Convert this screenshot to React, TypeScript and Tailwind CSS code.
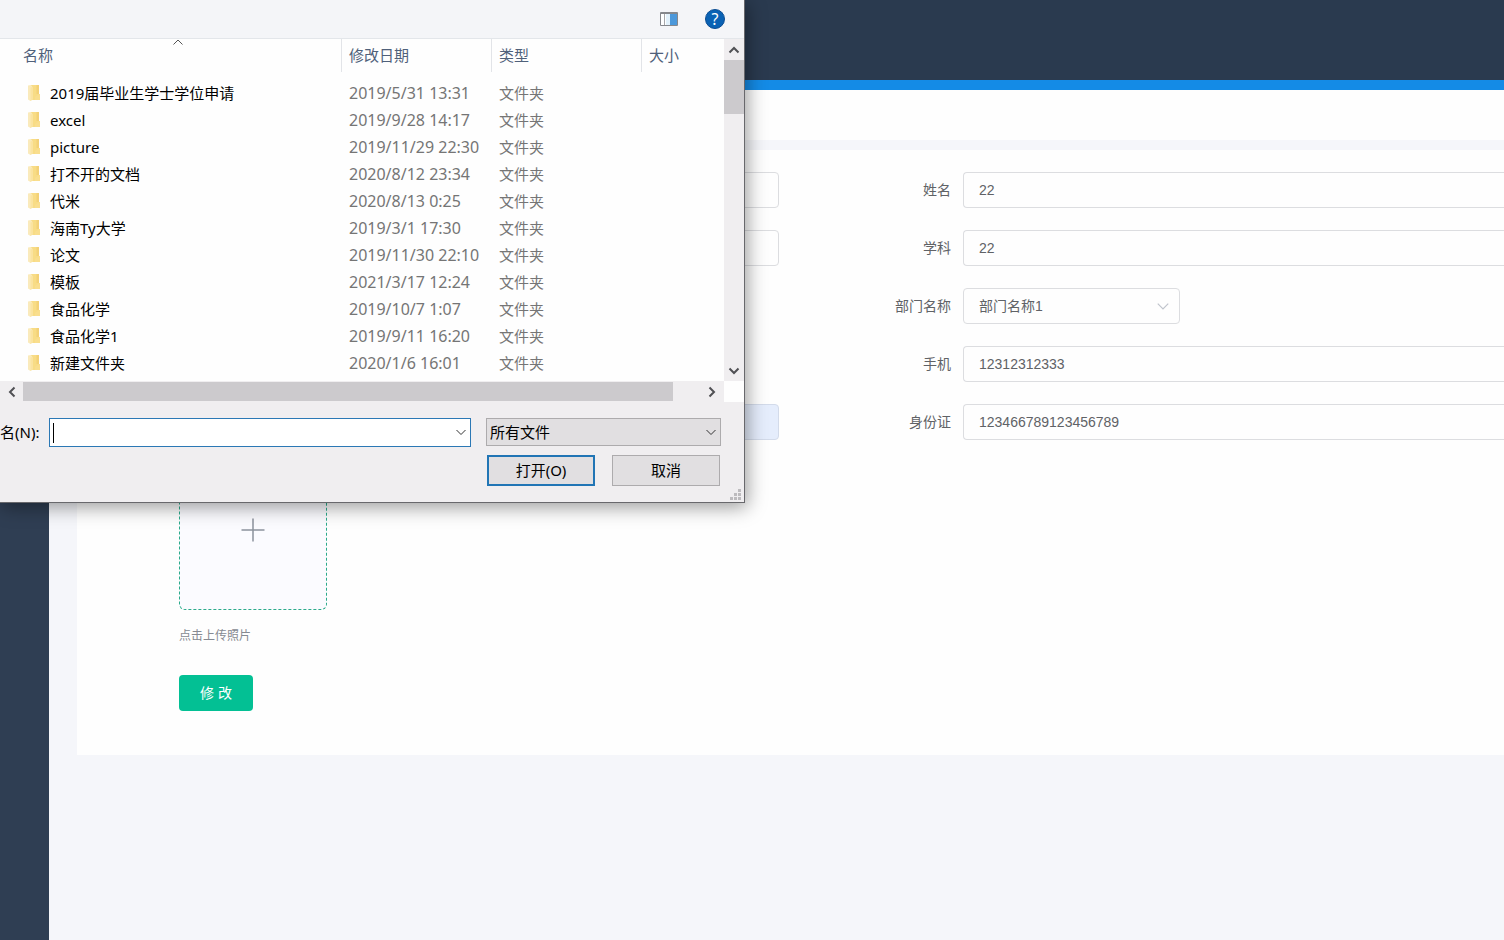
import React, { useState } from "react";
import clsx from "clsx";

interface FileEntry {
  name: string;
  date: string;
}

interface Field {
  id: string;
  label: string;
  value: string;
}

const files: FileEntry[] = [
  { name: "2019届毕业生学士学位申请", date: "2019/5/31 13:31" },
  { name: "excel", date: "2019/9/28 14:17" },
  { name: "picture", date: "2019/11/29 22:30" },
  { name: "打不开的文档", date: "2020/8/12 23:34" },
  { name: "代米", date: "2020/8/13 0:25" },
  { name: "海南Ty大学", date: "2019/3/1 17:30" },
  { name: "论文", date: "2019/11/30 22:10" },
  { name: "模板", date: "2021/3/17 12:24" },
  { name: "食品化学", date: "2019/10/7 1:07" },
  { name: "食品化学1", date: "2019/9/11 16:20" },
  { name: "新建文件夹", date: "2020/1/6 16:01" },
];

const initialFields: Field[] = [
  { id: "name", label: "姓名", value: "22" },
  { id: "subject", label: "学科", value: "22" },
  { id: "department", label: "部门名称", value: "部门名称1" },
  { id: "phone", label: "手机", value: "12312312333" },
  { id: "idcard", label: "身份证", value: "123466789123456789" },
];

const inputClass =
  "h-9 w-full min-w-0 rounded border border-[#dcdde0] bg-[#fefefe] px-[15px] text-sm text-[#606266] outline-none";

function Chevron({ className, path, size = 12 }: { className?: string; path: string; size?: number }) {
  return (
    <svg
      width={size}
      height={size}
      viewBox="0 0 12 12"
      fill="none"
      stroke="currentColor"
      className={clsx("pointer-events-none", className)}
    >
      <path d={path} />
    </svg>
  );
}

function FolderIcon() {
  return (
    <svg width="14" height="18" viewBox="0 0 14 18" className="shrink-0">
      <path d="M3 1h8v9h1v6H3z" fill="#f8dc85" />
      <path d="M8.500 1H11v9H8.500z" fill="#f3d177" />
      <path d="M11 10h1v6H7v-3z" fill="#f9de8e" />
      <path d="M0 1.500 3 1l1.500 2v12.500L2.500 17 0 15.500z" fill="#faeabb" />
      <path d="M2.500 3.500 4.500 3v12.500L2.500 17z" fill="#fbe4a0" />
    </svg>
  );
}

function FileTable() {
  return (
    <table className="w-full table-fixed border-collapse text-left">
      <colgroup>
        <col className="w-[341px]" />
        <col className="w-[150px]" />
        <col className="w-[150px]" />
        <col />
      </colgroup>
      <thead>
        <tr className="text-[#4f607a]">
          <th className="relative h-10 p-0 align-top font-normal">
            <Chevron
              className="absolute top-[-2px] left-[172px] text-[#555]"
              path="M1.500 7.500 6 3l4.500 4.500"
            />
            <div className="flex h-[33px] items-center pb-0.5 pl-[23px]">名称</div>
          </th>
          {["修改日期", "类型", "大小"].map((title) => (
            <th key={title} className="h-10 p-0 align-top font-normal">
              <div className="flex h-[33px] items-center border-l border-[#e2e4e8] pb-0.5 pl-[7px]">
                {title}
              </div>
            </th>
          ))}
        </tr>
      </thead>
      <tbody>
        {files.map((file) => (
          <tr key={file.name} className="h-[27px] text-[#757575]">
            <td className="p-0">
              <div className="flex items-center gap-2 pl-7 text-black">
                <FolderIcon />
                {file.name}
              </div>
            </td>
            <td className="p-0 pl-2 text-base leading-5 whitespace-nowrap">{file.date}</td>
            <td className="p-0 pl-2">文件夹</td>
            <td className="p-0" />
          </tr>
        ))}
      </tbody>
    </table>
  );
}

function FileDialog() {
  const [fileName, setFileName] = useState("");

  return (
    <div
      role="dialog"
      aria-label="打开"
      className="absolute top-0 left-0 z-10 w-[745px] border-r border-b border-[#68686c] bg-[#f0eef0] font-['Noto_Sans','Noto_Sans_CJK_SC',sans-serif] text-[15px] leading-5 text-black shadow-[2px_4px_18px_rgba(0,0,0,0.4)]"
    >
      {/* Toolbar */}
      <div className="flex h-[39px] items-center justify-end gap-[27px] border-b border-[#e3e6ea] bg-[#f4f5f8] pr-[19px]">
        <button type="button" aria-label="预览窗格">
          <svg width="18" height="14" viewBox="0 0 18 14">
            <path d="M.5.5h17v13H.5z" fill="#fff" stroke="#85878c" />
            <path d="M1 1h16v1H1z" fill="#85878c" />
            <path d="M4.500 2v11" stroke="#a5a7ab" />
            <path d="M6 2h4v11H6z" fill="#e2f1fb" />
            <path d="M10 2h7v11h-7z" fill="#4c98da" />
          </svg>
        </button>
        <button
          type="button"
          aria-label="帮助"
          className="flex size-5 items-center justify-center rounded-full border border-[#0b4d93] bg-[#0a62b4] text-base text-white"
        >
          ?
        </button>
      </div>

      {/* File list */}
      <div className="flex bg-[#fefefe]">
        <div className="min-w-0 flex-1 pb-[5px]">
          <FileTable />
        </div>
        <div className="flex w-5 flex-col items-center bg-[#f0eef0] text-[#505054]">
          <div className="flex h-[21px] items-center">
            <Chevron className="stroke-2" path="M1.500 8.500 6 4l4.500 4.500" />
          </div>
          <div className="h-[54px] w-full bg-[#cccacd]" />
          <div className="mt-auto flex h-[21px] items-center">
            <Chevron className="stroke-2" path="M1.500 3.500 6 8l4.500-4.500" />
          </div>
        </div>
      </div>
      <div className="flex h-[21px] bg-[#fefefe]">
        <div className="flex flex-1 items-center bg-[#f0eef0] text-[#505054]">
          <div className="flex w-[23px] justify-center">
            <Chevron className="stroke-2" path="M8.500 1.500 4 6l4.500 4.500" />
          </div>
          <div className="h-[19px] flex-1 bg-[#cccacd]" />
          <div className="flex w-[51px] justify-end pr-[6px]">
            <Chevron className="stroke-2" path="M3.500 1.500 8 6l-4.500 4.500" />
          </div>
        </div>
        <div className="w-5" />
      </div>

      {/* File name and actions */}
      <div className="flex items-start pt-4 pr-[23px]">
        <label htmlFor="file-name" className="w-[49px] shrink-0 pt-1 whitespace-nowrap">
          名(N):
        </label>
        <div className="relative flex-1">
          <input
            id="file-name"
            value={fileName}
            onChange={(e) => setFileName(e.target.value)}
            className="block h-[29px] w-full border border-[#2b78b5] bg-white pr-6 pl-1 outline-none"
          />
          {!fileName && <span className="absolute top-[5px] left-1 h-5 w-px bg-black" />}
          <Chevron className="absolute top-2 right-1 text-[#333]" path="M1.500 4 6 8.500 10.500 4" />
        </div>
        <div className="relative ml-[15px] w-[235px]">
          <select
            aria-label="文件类型"
            className="block h-7 w-full appearance-none border border-[#adabad] bg-[#e1dfe1] pr-6 pl-[3px] outline-none"
          >
            <option>所有文件</option>
          </select>
          <Chevron className="absolute top-2 right-1 text-[#333]" path="M1.500 4 6 8.500 10.500 4" />
        </div>
      </div>
      <div className="flex justify-end gap-[17px] pt-2 pr-6 pb-4">
        <button type="button" className="h-[31px] w-[108px] border-2 border-[#2175b5] bg-[#e1dfe1] pb-0.5">
          打开(O)
        </button>
        <button type="button" className="h-[31px] w-[108px] border border-[#adabad] bg-[#e1dfe1] pb-0.5">
          取消
        </button>
      </div>
      <svg width="12" height="12" viewBox="0 0 12 12" fill="#bdbbbe" className="absolute right-0.5 bottom-px">
        <path d="M8 0h3v3H8zM4 4h3v3H4zM8 4h3v3H8zM0 8h3v3H0zM4 8h3v3H4zM8 8h3v3H8z" />
      </svg>
    </div>
  );
}

function ProfileForm() {
  const [fields, setFields] = useState(initialFields);

  const update = (id: string, value: string) =>
    setFields(fields.map((f) => (f.id === id ? { ...f, value } : f)));

  return (
    <form className="bg-[#fefefe] pt-[22px] pb-11" onSubmit={(e) => e.preventDefault()}>
      <div className="grid grid-cols-[702fr_643fr] gap-x-[82px]">
        <div className="flex flex-col gap-[22px] pl-[102px]">
          <input aria-label="账号" className={inputClass} />
          <input aria-label="职称" className={inputClass} />
          <div className="h-9" />
          <div className="h-9" />
          <input
            aria-label="邮箱"
            className="h-9 w-full rounded border border-[#d3dbea] bg-[#e5edfc] px-[15px] outline-none"
          />
        </div>
        <div className="flex flex-col gap-[22px]">
          {fields.map((field) => (
            <div key={field.id} className="flex items-center">
              <label
                htmlFor={field.id}
                className="w-[102px] shrink-0 pr-3 text-right text-sm text-[#606266]"
              >
                {field.label}
              </label>
              {field.id === "department" ? (
                <div className="relative w-[217px]">
                  <select id={field.id} className={clsx(inputClass, "block appearance-none")}>
                    <option>{field.value}</option>
                  </select>
                  <Chevron
                    size={14}
                    className="absolute top-[11px] right-[10px] text-[#c0c4cc]"
                    path="M1.500 4 6 8.500 10.500 4"
                  />
                </div>
              ) : (
                <input
                  id={field.id}
                  value={field.value}
                  onChange={(e) => update(field.id, e.target.value)}
                  className={clsx(inputClass, "rounded-r-none border-r-0")}
                />
              )}
            </div>
          ))}
        </div>
      </div>

      <div className="mt-[22px] flex flex-col items-start pl-[102px]">
        <button
          type="button"
          aria-label="上传照片"
          className="flex h-[148px] w-[148px] items-center justify-center rounded-md border border-dashed border-[#2bab8b] bg-[#fbfbff]"
        >
          <svg width="24" height="24" viewBox="0 0 24 24" stroke="#8c939d" strokeWidth="1.500" className="-mt-3">
            <path d="M12 .5v23M.5 12h23" />
          </svg>
        </button>
        <p className="mt-4 text-xs leading-5 text-[#868a92]">点击上传照片</p>
        <button
          type="submit"
          className="mt-[29px] h-9 w-[74px] rounded bg-[#03c094] text-sm text-white"
        >
          修 改
        </button>
      </div>
    </form>
  );
}

export default function App() {
  return (
    <div className="relative flex min-h-screen flex-col overflow-hidden bg-[#f5f6fa] font-['Liberation_Sans','Noto_Sans_CJK_SC',sans-serif]">
      <header className="h-20 bg-[#2a3a4f]" />
      <div className="h-[10px] bg-[#148be6]" />
      <div className="flex flex-1">
        <aside className="w-[49px] shrink-0 bg-[#2f3e53]" />
        <main className="min-w-0 flex-1">
          <div className="h-[50px] bg-[#fefefe]" />
          <div className="pt-[10px] pl-7">
            <ProfileForm />
          </div>
        </main>
      </div>
      <FileDialog />
    </div>
  );
}
